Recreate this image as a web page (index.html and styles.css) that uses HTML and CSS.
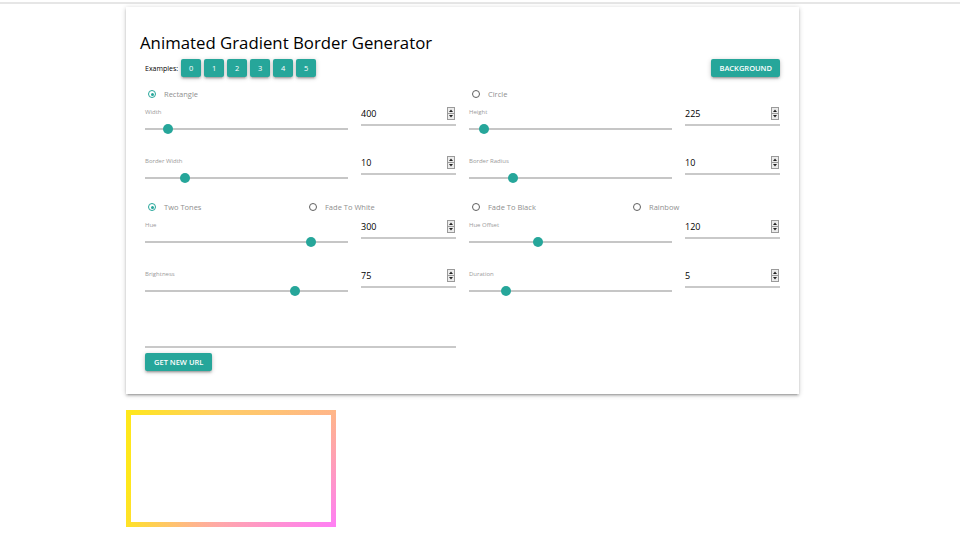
FILE: index.html
```html
<!DOCTYPE html>
<html lang="en">
<head>
    <meta charset="UTF-8">
    <meta name="viewport" content="width=device-width, initial-scale=1.0">
    <title>Animated Gradient Border Generator</title>
    <link rel="stylesheet" href="styles.css">
</head>
<body>
    <div class="topbar"></div>

    <div class="page">
        <div class="card">
            <h1>Animated Gradient Border Generator</h1>

            <div class="toolbar">
                <div class="examples">
                    <span class="examples-label">Examples:</span>
                    <button class="btn btn-small">0</button>
                    <button class="btn btn-small">1</button>
                    <button class="btn btn-small">2</button>
                    <button class="btn btn-small">3</button>
                    <button class="btn btn-small">4</button>
                    <button class="btn btn-small">5</button>
                </div>
                <button class="btn">BACKGROUND</button>
            </div>

            <div class="grid">
                <div class="column">
                    <label class="radio"><span class="dot checked"></span>Rectangle</label>

                    <div class="field">
                        <div class="range-wrap">
                            <div class="label">Width</div>
                            <input type="range" min="0" max="4300" value="400">
                        </div>
                        <div class="num"><span>400</span><svg class="spin" width="8" height="13" viewBox="0 0 8 13"><rect x="0.5" y="0.5" width="7" height="12" fill="#ececec" stroke="#9a9a9a"/><line x1="1" y1="6.5" x2="7" y2="6.5" stroke="#9a9a9a"/><path d="M2 5L4 2.5L6 5Z" fill="#222"/><path d="M2 8L4 10.5L6 8Z" fill="#222"/></svg></div>
                    </div>

                    <div class="field">
                        <div class="range-wrap">
                            <div class="label">Border Width</div>
                            <input type="range" min="0" max="55" value="10">
                        </div>
                        <div class="num"><span>10</span><svg class="spin" width="8" height="13" viewBox="0 0 8 13"><rect x="0.5" y="0.5" width="7" height="12" fill="#ececec" stroke="#9a9a9a"/><line x1="1" y1="6.5" x2="7" y2="6.5" stroke="#9a9a9a"/><path d="M2 5L4 2.5L6 5Z" fill="#222"/><path d="M2 8L4 10.5L6 8Z" fill="#222"/></svg></div>
                    </div>
                </div>

                <div class="column">
                    <label class="radio"><span class="dot"></span>Circle</label>

                    <div class="field">
                        <div class="range-wrap">
                            <div class="label">Height</div>
                            <input type="range" min="0" max="4300" value="225">
                        </div>
                        <div class="num"><span>225</span><svg class="spin" width="8" height="13" viewBox="0 0 8 13"><rect x="0.5" y="0.5" width="7" height="12" fill="#ececec" stroke="#9a9a9a"/><line x1="1" y1="6.5" x2="7" y2="6.5" stroke="#9a9a9a"/><path d="M2 5L4 2.5L6 5Z" fill="#222"/><path d="M2 8L4 10.5L6 8Z" fill="#222"/></svg></div>
                    </div>

                    <div class="field">
                        <div class="range-wrap">
                            <div class="label">Border Radius</div>
                            <input type="range" min="0" max="50" value="10">
                        </div>
                        <div class="num"><span>10</span><svg class="spin" width="8" height="13" viewBox="0 0 8 13"><rect x="0.5" y="0.5" width="7" height="12" fill="#ececec" stroke="#9a9a9a"/><line x1="1" y1="6.5" x2="7" y2="6.5" stroke="#9a9a9a"/><path d="M2 5L4 2.5L6 5Z" fill="#222"/><path d="M2 8L4 10.5L6 8Z" fill="#222"/></svg></div>
                    </div>
                </div>

                <div class="column">
                    <div class="radio-row">
                        <label class="radio"><span class="dot checked"></span>Two Tones</label>
                        <label class="radio"><span class="dot"></span>Fade To White</label>
                    </div>

                    <div class="field">
                        <div class="range-wrap">
                            <div class="label">Hue</div>
                            <input type="range" min="0" max="360" value="300">
                        </div>
                        <div class="num"><span>300</span><svg class="spin" width="8" height="13" viewBox="0 0 8 13"><rect x="0.5" y="0.5" width="7" height="12" fill="#ececec" stroke="#9a9a9a"/><line x1="1" y1="6.5" x2="7" y2="6.5" stroke="#9a9a9a"/><path d="M2 5L4 2.5L6 5Z" fill="#222"/><path d="M2 8L4 10.5L6 8Z" fill="#222"/></svg></div>
                    </div>

                    <div class="field">
                        <div class="range-wrap">
                            <div class="label">Brightness</div>
                            <input type="range" min="0" max="100" value="75">
                        </div>
                        <div class="num"><span>75</span><svg class="spin" width="8" height="13" viewBox="0 0 8 13"><rect x="0.5" y="0.5" width="7" height="12" fill="#ececec" stroke="#9a9a9a"/><line x1="1" y1="6.5" x2="7" y2="6.5" stroke="#9a9a9a"/><path d="M2 5L4 2.5L6 5Z" fill="#222"/><path d="M2 8L4 10.5L6 8Z" fill="#222"/></svg></div>
                    </div>
                </div>

                <div class="column">
                    <div class="radio-row">
                        <label class="radio"><span class="dot"></span>Fade To Black</label>
                        <label class="radio"><span class="dot"></span>Rainbow</label>
                    </div>

                    <div class="field">
                        <div class="range-wrap">
                            <div class="label">Hue Offset</div>
                            <input type="range" min="0" max="360" value="120">
                        </div>
                        <div class="num"><span>120</span><svg class="spin" width="8" height="13" viewBox="0 0 8 13"><rect x="0.5" y="0.5" width="7" height="12" fill="#ececec" stroke="#9a9a9a"/><line x1="1" y1="6.5" x2="7" y2="6.5" stroke="#9a9a9a"/><path d="M2 5L4 2.5L6 5Z" fill="#222"/><path d="M2 8L4 10.5L6 8Z" fill="#222"/></svg></div>
                    </div>

                    <div class="field">
                        <div class="range-wrap">
                            <div class="label">Duration</div>
                            <input type="range" min="0" max="30" value="5">
                        </div>
                        <div class="num"><span>5</span><svg class="spin" width="8" height="13" viewBox="0 0 8 13"><rect x="0.5" y="0.5" width="7" height="12" fill="#ececec" stroke="#9a9a9a"/><line x1="1" y1="6.5" x2="7" y2="6.5" stroke="#9a9a9a"/><path d="M2 5L4 2.5L6 5Z" fill="#222"/><path d="M2 8L4 10.5L6 8Z" fill="#222"/></svg></div>
                    </div>
                </div>
            </div>

            <div class="url-field">
                <input type="text" class="url-input">
            </div>
            <button class="btn">GET NEW URL</button>
        </div>

        <div class="preview"></div>
    </div>
</body>
</html>
```

FILE: styles.css
```css
body {
    margin: 0;
    font-family: "Open Sans", "Noto Sans", sans-serif;
    background-color: #fff;
    color: #000;
}

.topbar {
    height: 2px;
    border-bottom: 2px solid #e6e6e6;
}

.page {
    width: 673px;
    margin-left: 126px;
    padding-top: 3px;
}

.card {
    background-color: #fff;
    padding: 26px 19px 23px 19px;
    box-shadow: 0 2px 2px 0 rgba(0,0,0,0.14), 0 3px 1px -2px rgba(0,0,0,0.12), 0 1px 5px 0 rgba(0,0,0,0.2);
}

h1 {
    margin: 0 0 0 -5px;
    font-size: 16.8px;
    font-weight: 400;
    line-height: 20px;
}

.toolbar {
    display: flex;
    justify-content: space-between;
    align-items: center;
    margin-top: 6px;
}

.examples {
    display: flex;
    align-items: center;
    gap: 3px;
}

.examples-label {
    font-size: 7px;
    margin-right: 0;
}

.btn {
    height: 18px;
    padding: 0 8px;
    border: none;
    border-radius: 2px;
    background-color: #26a69a;
    color: #fff;
    font-family: inherit;
    font-size: 7.5px;
    font-weight: 600;
    box-shadow: 0 2px 2px 0 rgba(0,0,0,0.14), 0 3px 1px -2px rgba(0,0,0,0.12), 0 1px 5px 0 rgba(0,0,0,0.2);
    cursor: pointer;
}

.btn-small {
    width: 20px;
    padding: 0;
    font-weight: 400;
}

.grid {
    display: grid;
    grid-template-columns: 311px 311px;
    column-gap: 13px;
    margin-top: 10px;
}

.radio-row {
    display: grid;
    grid-template-columns: 161px 150px;
}

.radio {
    display: flex;
    align-items: center;
    height: 14px;
    padding-left: 3px;
    font-size: 7.5px;
    color: #8f8f8f;
}

.dot {
    position: relative;
    width: 6px;
    height: 6px;
    margin-right: 8px;
    border: 1.5px solid #5f5f5f;
    border-radius: 50%;
}

.dot.checked {
    border-color: #26a69a;
}

.dot.checked::after {
    content: "";
    position: absolute;
    left: 1.5px;
    top: 1.5px;
    width: 3px;
    height: 3px;
    border-radius: 50%;
    background-color: #26a69a;
}

.field {
    display: flex;
    gap: 13px;
    margin-top: 6px;
    margin-bottom: 15px;
}

.field:last-child {
    margin-bottom: 10px;
}

.range-wrap {
    width: 203px;
}

.label {
    height: 10px;
    font-size: 6px;
    line-height: 10px;
    color: #9a9a9a;
}

input[type=range] {
    -webkit-appearance: none;
    appearance: none;
    display: block;
    width: 203px;
    height: 24px;
    margin: 0;
    background: transparent;
}

input[type=range]::-webkit-slider-runnable-track {
    height: 2px;
    background-color: #c6c6c6;
}

input[type=range]::-webkit-slider-thumb {
    -webkit-appearance: none;
    width: 10px;
    height: 10px;
    margin-top: -4px;
    border: none;
    border-radius: 50%;
    background-color: #26a69a;
}

.num {
    display: flex;
    justify-content: space-between;
    align-items: center;
    width: 95px;
    height: 12px;
    padding-bottom: 5px;
    border-bottom: 2px solid #c9c9c9;
    font-size: 9px;
}

.spin {
    margin-right: 1px;
}

.url-field {
    width: 311px;
    margin-top: 17px;
}

.url-input {
    display: block;
    width: 100%;
    height: 16px;
    padding: 0;
    border: none;
    border-bottom: 2px solid #c9c9c9;
    outline: none;
}

.url-field + .btn {
    margin-top: 3px;
    padding: 0 9px;
}

.preview {
    width: 200px;
    height: 107px;
    margin-top: 16px;
    border: 5px solid transparent;
    background:
        linear-gradient(#fff, #fff) padding-box,
        radial-gradient(ellipse 220px 120px at 100% 100%, #ff7ff5, rgba(255, 127, 245, 0)) border-box,
        linear-gradient(to right, #ffe81a, #ffcc66 45%, #ffb884) border-box;
}
```
